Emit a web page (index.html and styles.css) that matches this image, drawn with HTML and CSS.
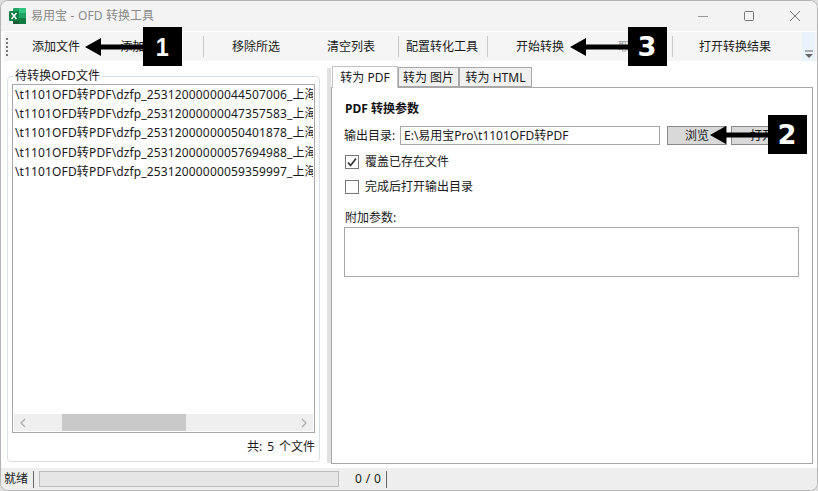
FILE: index.html
```html
<!DOCTYPE html>
<html lang="zh-CN">
<head>
<meta charset="utf-8">
<title>易用宝 - OFD 转换工具</title>
<link rel="stylesheet" href="styles.css">
</head>
<body>
<div class="window">
  <header class="titlebar">
    <svg class="app-icon" width="17" height="16" viewBox="0 0 17 16">
      <rect x="4" y="0" width="13" height="16" rx="1" fill="#21a366"/>
      <rect x="10" y="0" width="7" height="5" fill="#33c481"/>
      <rect x="10" y="5" width="7" height="5" fill="#21a366"/>
      <rect x="10" y="10" width="7" height="6" fill="#107c41"/>
      <rect x="4" y="10" width="6" height="6" fill="#185c37"/>
      <rect x="0" y="3" width="10" height="10" rx="1" fill="#107c41"/>
      <path d="M2.5 5l5 6M7.5 5l-5 6" stroke="#fff" stroke-width="1.5" fill="none"/>
    </svg>
    <span class="title-text">易用宝 - OFD 转换工具</span>
    <div class="controls">
      <svg width="12" height="12" viewBox="0 0 12 12"><path d="M1 6.5h10" stroke="#999" stroke-width="1" fill="none"/></svg>
      <svg width="12" height="12" viewBox="0 0 12 12"><rect x="1.5" y="1.5" width="9" height="9" rx="1" stroke="#777" fill="none"/></svg>
      <svg width="12" height="12" viewBox="0 0 12 12"><path d="M1 1l10 10M11 1L1 11" stroke="#777" stroke-width="1" fill="none"/></svg>
    </div>
  </header>

  <nav class="toolbar">
    <div class="grip"><i></i><i></i><i></i><i></i><i></i></div>
    <div class="tool w84">添加文件</div>
    <div class="tool w105">添加文件夹</div>
    <div class="sep"></div>
    <div class="tool w104">移除所选</div>
    <div class="tool w86">清空列表</div>
    <div class="sep sep-a"></div>
    <div class="tool w86">配置转化工具</div>
    <div class="sep sep-b"></div>
    <div class="tool w104">开始转换</div>
    <div class="tool w80 shifted">取消转换</div>
    <div class="sep"></div>
    <div class="tool w124">打开转换结果</div>
    <div class="overflow">
      <svg width="10" height="8" viewBox="0 0 10 8"><path d="M1 1h8" stroke="#666" fill="none"/><path d="M1 4h8L5 8z" fill="#666"/></svg>
    </div>
  </nav>

  <main class="main">
    <fieldset class="files">
      <legend class="files-legend">待转换OFD文件</legend>
      <div class="list">
        <div class="rows">
          <div class="row">\t1101OFD转PDF\dzfp_25312000000044507006_上海增值税电子发票.ofd</div>
          <div class="row">\t1101OFD转PDF\dzfp_25312000000047357583_上海增值税电子发票.ofd</div>
          <div class="row">\t1101OFD转PDF\dzfp_25312000000050401878_上海增值税电子发票.ofd</div>
          <div class="row">\t1101OFD转PDF\dzfp_25312000000057694988_上海增值税电子发票.ofd</div>
          <div class="row">\t1101OFD转PDF\dzfp_25312000000059359997_上海增值税电子发票.ofd</div>
        </div>
        <div class="hscroll">
          <svg class="chev" width="6" height="10" viewBox="0 0 6 10"><path d="M5 1L1 5l4 4" stroke="#aaa" stroke-width="1.2" fill="none"/></svg>
          <div class="thumb"></div>
          <svg class="chev" width="6" height="10" viewBox="0 0 6 10"><path d="M1 1l4 4-4 4" stroke="#aaa" stroke-width="1.2" fill="none"/></svg>
        </div>
      </div>
      <div class="count">共: 5 个文件</div>
    </fieldset>

    <div class="splitter"></div>

    <section class="tabs">
      <div class="tabbar">
        <div class="tab active">转为 PDF</div>
        <div class="tab t-img">转为 图片</div>
        <div class="tab t-html">转为 HTML</div>
      </div>
      <div class="panel">
        <div class="panel-title">PDF 转换参数</div>
        <div class="out-row">
          <span class="out-label">输出目录:</span>
          <div class="field">E:\易用宝Pro\t1101OFD转PDF</div>
          <div class="btn browse">浏览</div>
          <div class="btn open">打开</div>
        </div>
        <div class="check first">
          <svg class="box" width="14" height="14" viewBox="0 0 14 14"><rect x="0.5" y="0.5" width="13" height="13" fill="#fff" stroke="#777"/><path d="M3 7.5l2.6 3L11 3.5" stroke="#333" stroke-width="1.7" fill="none"/></svg>
          <span>覆盖已存在文件</span>
        </div>
        <div class="check second">
          <svg class="box" width="14" height="14" viewBox="0 0 14 14"><rect x="0.5" y="0.5" width="13" height="13" fill="#fff" stroke="#777"/></svg>
          <span>完成后打开输出目录</span>
        </div>
        <div class="extra-label">附加参数:</div>
        <div class="extra"></div>
      </div>
    </section>
  </main>

  <footer class="status">
    <span class="ready">就绪</span>
    <div class="vline"></div>
    <div class="progress"></div>
    <span class="progress-text">0 / 0</span>
    <div class="vline"></div>
  </footer>

  <div class="mark mark1">
    <svg class="arrow" width="58" height="18" viewBox="0 0 58 18"><path d="M0 9L16 0v6.500h42v5H16v6.500z" fill="#000"/></svg>
    <div class="badge"><span class="digit d1">1</span></div>
  </div>
  <div class="mark mark2">
    <svg class="arrow" width="58" height="18" viewBox="0 0 58 18"><path d="M0 9L16 0v6.500h42v5H16v6.500z" fill="#000"/></svg>
    <div class="badge"><span class="digit d2">2</span></div>
  </div>
  <div class="mark mark3">
    <svg class="arrow" width="58" height="18" viewBox="0 0 58 18"><path d="M0 9L16 0v6.500h42v5H16v6.500z" fill="#000"/></svg>
    <div class="badge"><span class="digit d3">3</span></div>
  </div>
</div>
</body>
</html>
```

FILE: styles.css
```css
* { box-sizing: border-box; }
html, body { margin: 0; padding: 0; background: #dcdcdc; }
body {
  width: 818px;
  height: 491px;
  overflow: hidden;
  font: 12px/16px "Noto Sans", "Noto Sans CJK SC", sans-serif;
  color: #1a1a1a;
}
.window {
  position: relative;
  width: 818px;
  height: 491px;
  display: flex;
  flex-direction: column;
  background: #fff;
  border: 1px solid #b4b4b4;
  border-radius: 8px;
  overflow: hidden;
}
.titlebar {
  flex: 0 0 30px;
  display: flex;
  align-items: center;
  padding-left: 8px;
  background: #f3f3f3;
}
.app-icon { flex: none; }
.title-text { margin-left: 5px; color: #8a8a8a; word-spacing: 0.5px; }
.controls {
  margin-left: auto;
  display: flex;
  gap: 34px;
  padding-right: 16px;
  align-items: center;
}
.toolbar {
  flex: 0 0 29px;
  display: flex;
  align-items: center;
  margin: 1px 0 0 3px;
  background: #f5f5f5;
  position: relative;
}
.grip {
  width: 10px;
  display: flex;
  flex-direction: column;
  gap: 2px;
  padding-left: 2px;
}
.grip i { width: 2px; height: 2px; background: #777; }
.tool { text-align: center; white-space: nowrap; overflow: hidden; }
.w84 { width: 84px; }
.w105 { width: 105px; }
.w104 { width: 104px; }
.w86 { width: 86px; }
.w80 { width: 80px; }
.w124 { width: 124px; }
.shifted { padding-left: 20px; color: #9a9a9a; }
.sep { width: 1px; height: 21px; background: #c9c9c9; flex: none; }
.sep-a { margin-left: 4px; }
.sep-b { margin-left: 2px; }
.overflow {
  margin-left: auto;
  width: 13px;
  margin-right: 2px;
  align-self: stretch;
  background: #eaf2fb;
  display: flex;
  align-items: flex-end;
  justify-content: center;
  padding-bottom: 3px;
  border-radius: 0 3px 3px 0;
}
.main {
  flex: 1;
  min-height: 0;
  display: flex;
  background: #fff;
}
.files {
  flex: none;
  width: 313px;
  margin: 7px 0 6px 6px;
  padding: 0 4px 0 4px;
  border: 1px solid #d9dfe6;
  border-radius: 4px;
  display: flex;
  flex-direction: column;
  min-width: 0;
}
.files-legend { padding: 0 2px; margin-left: 1px; line-height: 16px; letter-spacing: 0.1px; }
.list {
  flex: 1;
  min-height: 0;
  display: flex;
  flex-direction: column;
  border: 1px solid #a8a8a8;
  background: #fff;
}
.rows { flex: 1; min-height: 0; overflow: hidden; padding: 0 1px 0 2px; }
.row { height: 19.2px; line-height: 19.2px; white-space: nowrap; overflow: hidden; letter-spacing: 0.14px; }
.hscroll {
  flex: 0 0 17px;
  margin: 0 1px 1px 1px;
  background: #efefef;
  display: flex;
  align-items: center;
  padding: 0 6px;
}
.chev { flex: none; }
.thumb { width: 124px; height: 17px; background: #c9c9c9; margin-left: 36px; margin-right: auto; }
.count { flex: 0 0 25px; line-height: 28px; text-align: right; word-spacing: 1.8px; }
.splitter {
  flex: none;
  width: 4px;
  margin: 7px 0 5px 7px;
  background: #e1e1e1;
}
.tabs {
  flex: 1;
  min-width: 0;
  margin: 5px 4px 4px 0;
  display: flex;
  flex-direction: column;
}
.tabbar {
  flex: 0 0 22px;
  display: flex;
  align-items: flex-end;
  position: relative;
  z-index: 1;
  padding-left: 1px;
}
.tab {
  height: 20px;
  line-height: 19px;
  text-align: center;
  background: #f0f0f0;
  border: 1px solid #a8a8a8;
  margin-bottom: 1px;
  white-space: nowrap;
}
.tab.active {
  width: 66px;
  height: 22px;
  background: #fff;
  border-color: #c4c4c4;
  border-bottom: none;
  margin-bottom: 0;
  line-height: 21px;
}
.t-img { width: 61px; }
.t-html { width: 73px; }
.panel {
  flex: 1;
  min-height: 0;
  margin-top: -1px;
  border: 1px solid #a8a8a8;
  padding: 13px 13px 0 12px;
  background: #fff;
}
.panel-title { font-weight: 700; padding-left: 1px; color: #111; }
.out-row { display: flex; align-items: center; margin-top: 9px; height: 19px; }
.out-label { flex: 0 0 56px; }
.field {
  flex: 0 0 260px;
  height: 19px;
  line-height: 17px;
  padding-left: 3px;
  border: 1px solid #a8a8a8;
  white-space: nowrap;
}
.btn {
  height: 19px;
  line-height: 17px;
  text-align: center;
  background: #d9d9d9;
  border: 1px solid #8a8a8a;
}
.browse { width: 60px; margin-left: 7px; }
.open { width: 62px; margin-left: 4px; }
.check { display: flex; align-items: center; height: 18px; padding-left: 1px; gap: 6px; }
.check.first { margin-top: 8px; }
.check.second { margin-top: 7px; }
.box { flex: none; }
.extra-label { margin-top: 14px; padding-left: 1px; }
.extra { height: 50px; margin-top: 1px; border: 1px solid #a8a8a8; }
.status {
  flex: 0 0 22px;
  display: flex;
  align-items: center;
  background: #eeeeee;
  padding-left: 3px;
}
.ready { width: 29px; }
.vline { width: 1px; height: 17px; background: #666; flex: none; }
.progress {
  width: 300px;
  height: 16px;
  margin-left: 5px;
  background: #e6e6e6;
  border: 1px solid #bdbdbd;
}
.progress-text { width: 42px; margin-right: 5px; text-align: right; word-spacing: 0.8px; }
.mark {
  position: absolute;
  display: flex;
  align-items: center;
}
.mark1 { left: 84px; top: 26px; }
.mark2 { left: 709px; top: 114px; }
.mark3 { left: 569px; top: 26px; }
.arrow { flex: none; }
.badge {
  width: 39px;
  height: 39px;
  background: #000;
  color: #fff;
  display: flex;
  align-items: center;
  justify-content: center;
  overflow: hidden;
}
.digit {
  font: 700 26px/28px "DejaVu Sans", sans-serif;
  display: block;
  transform: scaleX(1.05);
}
.d1 { font-family: "Liberation Sans", sans-serif; transform: scaleX(0.9); }
```
